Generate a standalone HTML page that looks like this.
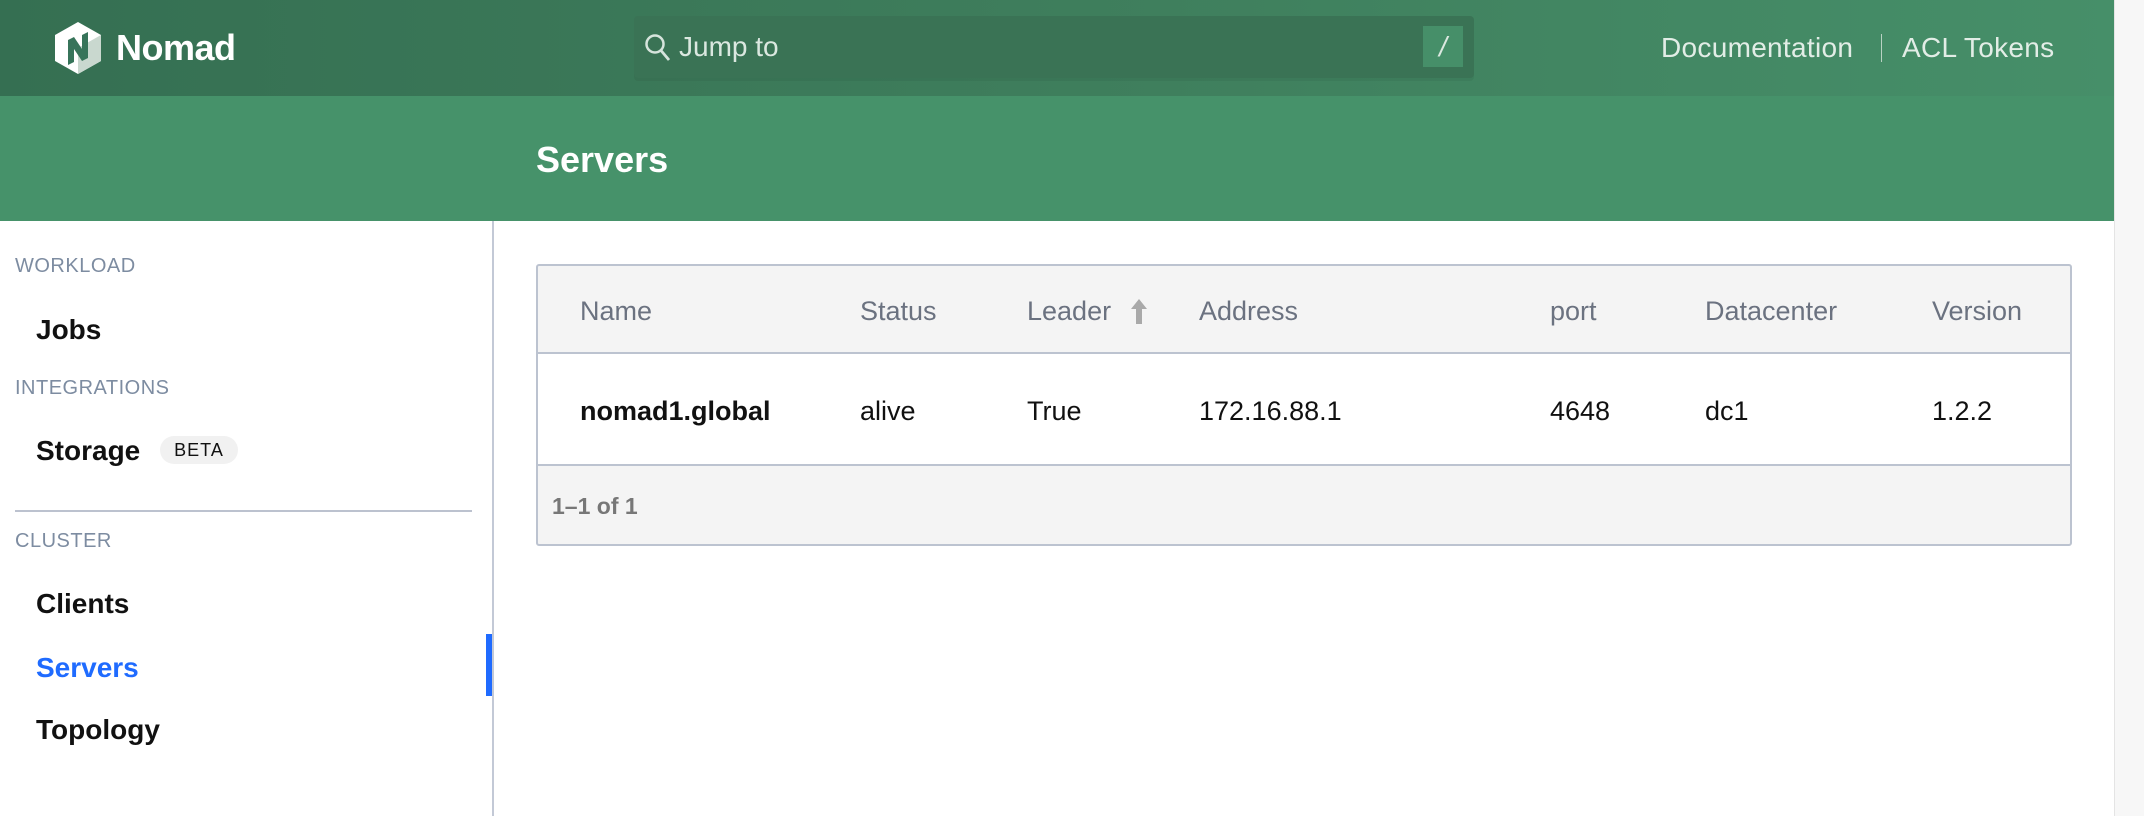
<!DOCTYPE html>
<html><head><meta charset="utf-8"><style>
*{box-sizing:border-box;margin:0;padding:0}
body{width:2144px;height:816px;overflow:hidden;background:#fff;font-family:"Liberation Sans",sans-serif;position:relative}
.abs{position:absolute;white-space:nowrap}
#top{left:0;top:0;width:2114px;height:96px;background:linear-gradient(90deg,#356f52,#3f7f5d 55%,#468f69)}
#sub{left:0;top:96px;width:2114px;height:125px;background:#46926a}
#scroll{left:2114px;top:0;width:30px;height:816px;background:#f7f7f7;border-left:1px solid #e4e4e4}
#search{left:634px;top:16px;width:840px;height:62px;background:#3a7355;border-radius:4px;box-shadow:0 3px 0 rgba(0,0,0,0.05)}
.lab{font-size:20px;color:#7d8ca1;letter-spacing:0.5px;left:15px}
.nav{font-size:28px;font-weight:bold;color:#111;left:36px}
.th{font-size:27px;color:#6b7280;top:296px}
.td{font-size:27px;color:#111;top:396px}
</style></head><body>
<div id="top" class="abs"></div>
<div id="sub" class="abs"></div>
<div id="scroll" class="abs"></div>
<svg class="abs" style="left:55px;top:22px" width="46" height="52" viewBox="0 0 46 52">
<polygon points="23,0 46,13 46,39 23,52 0,39 0,13" fill="#fff"/>
<polygon points="23,26 46,13 46,39 23,52" fill="#c9d8cf"/>
<path d="M13,18 L19,15 L27,27 L27,13 L33,10 L33,36 L27,39 L19,27 L19,40 L13,43 Z" fill="#37745a"/>
</svg>
<div class="abs" style="left:116px;top:27px;font-size:36px;font-weight:bold;color:#fff;letter-spacing:-0.5px">Nomad</div>
<div id="search" class="abs"></div>
<svg class="abs" style="left:644px;top:33px" width="28" height="30" viewBox="0 0 28 30"><circle cx="11" cy="11" r="8.5" fill="none" stroke="#d6e4dc" stroke-width="2.5"/><line x1="17" y1="17.5" x2="25" y2="27" stroke="#d6e4dc" stroke-width="2.8"/></svg>
<div class="abs" style="left:679px;top:31px;font-size:28px;color:#dbe8e0">Jump to</div>
<div class="abs" style="left:1423px;top:26px;width:40px;height:41px;background:#468f69;color:#dbe8e0;font-size:28px;text-align:center;line-height:41px;font-style:italic">/</div>
<div class="abs" style="left:1661px;top:32px;font-size:28px;color:#e2ede6;letter-spacing:0.3px">Documentation</div>
<div class="abs" style="left:1881px;top:34px;width:1px;height:28px;background:#b9d2c3"></div>
<div class="abs" style="left:1902px;top:32px;font-size:28px;color:#e2ede6;letter-spacing:0.3px">ACL Tokens</div>
<div class="abs" style="left:536px;top:139px;font-size:36px;font-weight:bold;color:#fff">Servers</div>

<div class="abs" style="left:492px;top:221px;width:2px;height:595px;background:#c3c9d6"></div>
<div class="abs lab" style="top:255px">WORKLOAD</div>
<div class="nav abs" style="top:314px">Jobs</div>
<div class="abs lab" style="top:377px">INTEGRATIONS</div>
<div class="nav abs" style="top:435px">Storage</div>
<div class="abs" style="left:160px;top:436px;width:78px;height:28px;background:#f1f1f1;border-radius:14px;font-size:18px;color:#111;text-align:center;line-height:28px;letter-spacing:1px">BETA</div>
<div class="abs" style="left:15px;top:510px;width:457px;height:2px;background:#bcc2cf"></div>
<div class="abs lab" style="top:530px">CLUSTER</div>
<div class="nav abs" style="top:588px">Clients</div>
<div class="nav abs" style="top:652px;color:#1f6bff">Servers</div>
<div class="abs" style="left:486px;top:634px;width:6px;height:62px;background:#1f6bff"></div>
<div class="nav abs" style="top:714px">Topology</div>

<div class="abs" style="left:536px;top:264px;width:1536px;height:282px;border:2px solid #bcc3d0;border-radius:3px;background:#f4f4f4;overflow:hidden">
<div style="position:absolute;left:0;top:86px;width:100%;height:114px;background:#fff;border-top:2px solid #bcc3d0;border-bottom:2px solid #bcc3d0"></div>
</div>
<div class="abs th" style="left:580px">Name</div>
<div class="abs th" style="left:860px">Status</div>
<div class="abs th" style="left:1027px">Leader</div>
<svg class="abs" style="left:1130px;top:299px" width="18" height="25" viewBox="0 0 18 25"><polygon points="9,0 17,10 12,10 12,25 6,25 6,10 1,10" fill="#a9a9a9"/></svg>
<div class="abs th" style="left:1199px">Address</div>
<div class="abs th" style="left:1550px">port</div>
<div class="abs th" style="left:1705px">Datacenter</div>
<div class="abs th" style="left:1932px">Version</div>
<div class="abs td" style="left:580px;font-weight:bold">nomad1.global</div>
<div class="abs td" style="left:860px">alive</div>
<div class="abs td" style="left:1027px">True</div>
<div class="abs td" style="left:1199px">172.16.88.1</div>
<div class="abs td" style="left:1550px">4648</div>
<div class="abs td" style="left:1705px">dc1</div>
<div class="abs td" style="left:1932px">1.2.2</div>
<div class="abs" style="left:552px;top:493px;font-size:23px;font-weight:bold;color:#777">1–1 of 1</div>
</body></html>
